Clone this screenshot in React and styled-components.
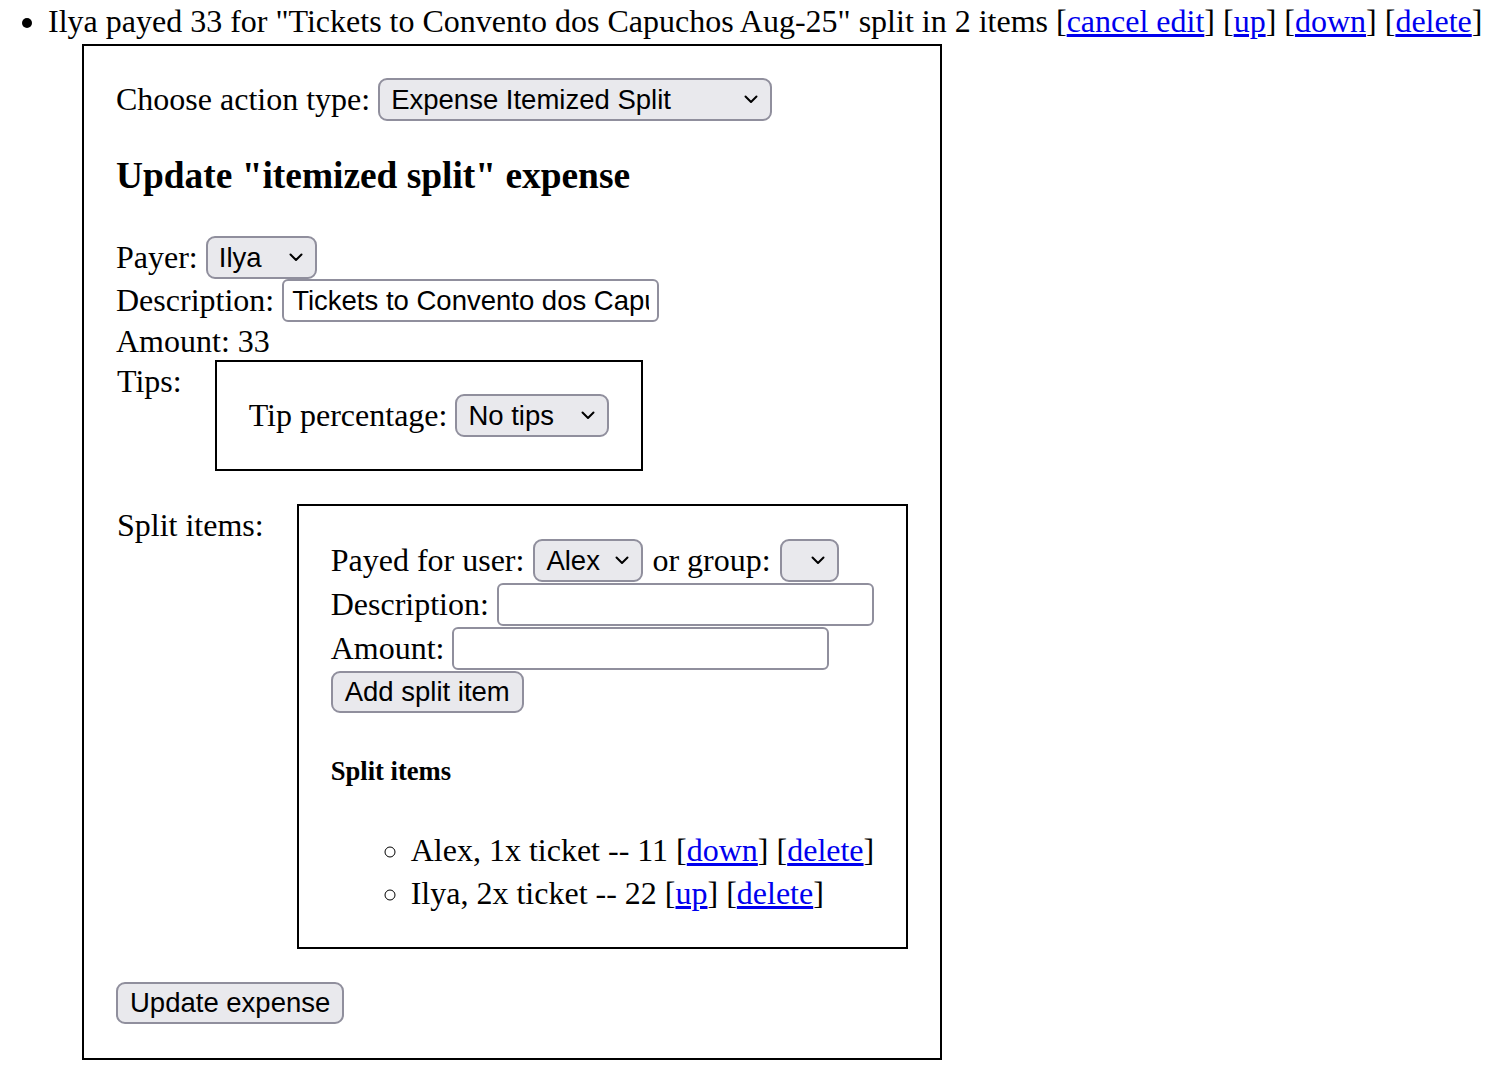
import React from 'react';
import styled, { createGlobalStyle } from 'styled-components';

const GlobalStyle = createGlobalStyle`
  body {
    margin: 0;
    padding-top: 3px;
    background: #fff;
    color: #000;
    font-family: 'Liberation Serif', 'Times New Roman', serif;
    font-size: 32px;
  }
`;

const controlFont = `'Liberation Sans', Arial, sans-serif`;

const ExpenseList = styled.ul`
  margin: 0;
  padding-left: 48px;
  list-style: disc;
  line-height: 37px;
`;

const Link = styled.a`
  color: #0000ee;
  text-decoration: underline;
  cursor: pointer;
`;

const EditBox = styled.div`
  box-sizing: border-box;
  width: 860px;
  margin: 4px 0 0 34px;
  border: 2px solid #000;
  padding: 32px;
`;

const Row = styled.div`
  display: flex;
  align-items: center;
  gap: ${(p) => p.$gap || 8}px;
  height: ${(p) => p.$h || 44}px;
  white-space: nowrap;
`;

const Heading = styled.h3`
  margin: 33px 0 38px;
  font-size: 37.4px;
  line-height: 43px;
  font-weight: bold;
`;

const SelectWrap = styled.span`
  position: relative;
  display: inline-block;
  width: ${(p) => p.$w}px;
  height: 43px;
`;

const Select = styled.select`
  appearance: none;
  box-sizing: border-box;
  width: 100%;
  height: 100%;
  margin: 0;
  padding: 0 34px 0 11px;
  border: 2px solid #908f9d;
  border-radius: 9px;
  background: #e9e9ed;
  color: #000;
  font-family: ${controlFont};
  font-size: 27.5px;
`;

const Chevron = styled.svg`
  position: absolute;
  right: 14px;
  top: 17px;
  width: 14px;
  height: 9px;
  pointer-events: none;
`;

const Input = styled.input`
  box-sizing: border-box;
  width: 377px;
  height: 43px;
  margin: 0;
  padding: 0 8px;
  border: 2px solid #908f9d;
  border-radius: 6px;
  background: #fff;
  color: #000;
  font-family: ${controlFont};
  font-size: 27.5px;
`;

const Button = styled.button`
  box-sizing: border-box;
  height: 42px;
  margin: 0;
  padding: 0 12px;
  border: 2px solid #908f9d;
  border-radius: 9px;
  background: #e9e9ed;
  color: #000;
  font-family: ${controlFont};
  font-size: 27.5px;
`;

const FieldRow = styled.div`
  display: flex;
  align-items: flex-start;
  gap: 33px;
  margin-top: ${(p) => p.$mt || 0}px;
  line-height: 37px;
`;

const FieldLabel = styled.span`
  padding: 3px 0 0 1px;
  white-space: nowrap;
`;

const Framed = styled.div`
  border: 2px solid #000;
  padding: 32px;
`;

const SubHeading = styled.h5`
  margin: 42px 0;
  font-size: 26.6px;
  line-height: 31px;
  font-weight: bold;
`;

const ItemList = styled.ul`
  margin: 0;
  padding-left: 80px;
  list-style: circle;
  line-height: 43px;
  white-space: nowrap;
`;

const Footer = styled.div`
  margin-top: 33px;
  padding-bottom: 2px;
  display: flex;
`;

function Dropdown({ width, value, options = [value] }) {
  return (
    <SelectWrap $w={width}>
      <Select defaultValue={value}>
        {options.map((o) => (
          <option key={o}>{o}</option>
        ))}
      </Select>
      <Chevron viewBox="0 0 14 9" fill="none">
        <path d="M1.5 1.5 L7 7 L12.5 1.5" stroke="#000" strokeWidth="2" strokeLinecap="round" strokeLinejoin="round" />
      </Chevron>
    </SelectWrap>
  );
}

const splitItems = [
  { text: 'Alex, 1x ticket -- 11', actions: ['down', 'delete'] },
  { text: 'Ilya, 2x ticket -- 22', actions: ['up', 'delete'] },
];

export default function App() {
  return (
    <>
      <GlobalStyle />
      <ExpenseList>
        <li>
          Ilya payed 33 for "Tickets to Convento dos Capuchos Aug-25" split in 2 items [
          <Link>cancel edit</Link>] [<Link>up</Link>] [<Link>down</Link>] [<Link>delete</Link>]
          <EditBox>
            <Row $h={43}>
              Choose action type:
              <Dropdown width={394} value="Expense Itemized Split" />
            </Row>

            <Heading>Update "itemized split" expense</Heading>

            <Row>
              Payer:
              <Dropdown width={111} value="Ilya" options={['Ilya', 'Alex']} />
            </Row>
            <Row $h={43}>
              Description:
              <Input defaultValue="Tickets to Convento dos Capuchos Aug-25" />
            </Row>
            <Row $h={38}>Amount: 33</Row>

            <FieldRow>
              <FieldLabel>Tips:</FieldLabel>
              <Framed>
                <Row $h={43}>
                  Tip percentage:
                  <Dropdown width={154} value="No tips" />
                </Row>
              </Framed>
            </FieldRow>

            <FieldRow $mt={33}>
              <FieldLabel>Split items:</FieldLabel>
              <Framed>
                <Row $gap={9}>
                  Payed for user:
                  <Dropdown width={110} value="Alex" options={['Alex', 'Ilya']} />
                  or group:
                  <Dropdown width={59} value="" />
                </Row>
                <Row>
                  Description:
                  <Input />
                </Row>
                <Row>
                  Amount:
                  <Input />
                </Row>
                <Row>
                  <Button>Add split item</Button>
                </Row>

                <SubHeading>Split items</SubHeading>

                <ItemList>
                  {splitItems.map((item) => (
                    <li key={item.text}>
                      {item.text}{' '}
                      {item.actions.map((a, i) => (
                        <React.Fragment key={a}>
                          {i > 0 && ' '}[<Link>{a}</Link>]
                        </React.Fragment>
                      ))}
                    </li>
                  ))}
                </ItemList>
              </Framed>
            </FieldRow>

            <Footer>
              <Button>Update expense</Button>
            </Footer>
          </EditBox>
        </li>
      </ExpenseList>
    </>
  );
}
